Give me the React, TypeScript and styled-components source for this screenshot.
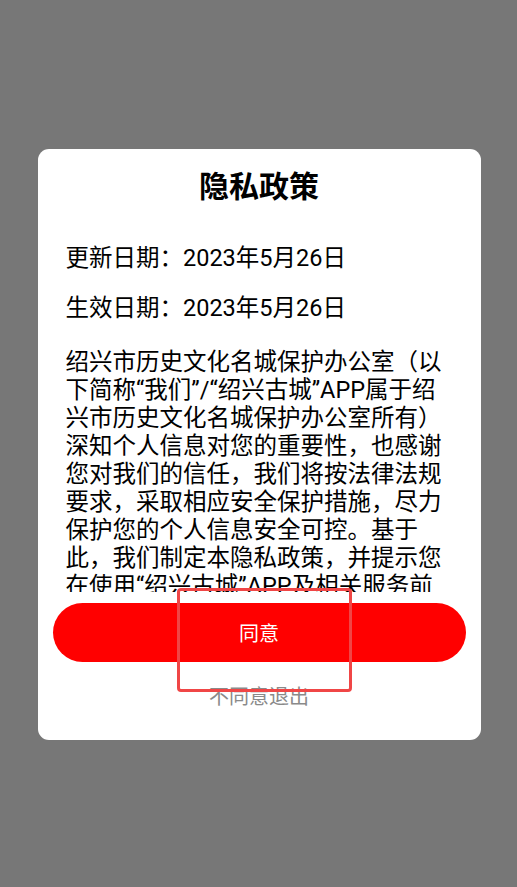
import React from 'react';
import styled, { createGlobalStyle } from 'styled-components';

const GlobalStyle = createGlobalStyle`
  html, body {
    margin: 0;
    padding: 0;
    background: #777777;
  }
  body {
    font-family: Roboto, "Noto Sans CJK SC", sans-serif;
  }
`;

const Screen = styled.div`
  width: 517px;
  height: 887px;
  box-sizing: border-box;
  padding: 1px 0 0 1px;
  display: flex;
  align-items: center;
  justify-content: center;
  background: #777777;
`;

const Dialog = styled.div`
  position: relative;
  width: 443px;
  height: 591px;
  box-sizing: border-box;
  background: #ffffff;
  border-radius: 11px;
  display: flex;
  flex-direction: column;
  padding: 18px 15px 29px;
`;

const Title = styled.h1`
  margin: 0;
  font-size: 30px;
  line-height: 40px;
  font-weight: 700;
  color: #000;
  text-align: center;
`;

const Scroll = styled.div`
  flex: 1;
  overflow: hidden;
  padding: 37px 13px 0;
  margin-bottom: 11px;
`;

const Para = styled.div<{ $gap?: number }>`
  font-size: 23.5px;
  line-height: 28px;
  color: #000;
  margin-bottom: ${(p) => p.$gap ?? 22}px;
`;

const Line = styled.div`
  white-space: nowrap;
`;

const AgreeButton = styled.button`
  height: 59px;
  width: 100%;
  flex-shrink: 0;
  border: none;
  border-radius: 30px;
  background: #ff0000;
  color: #ffffff;
  font-family: inherit;
  font-size: 20px;
  cursor: pointer;
`;

const Refuse = styled.div`
  margin-top: 21px;
  text-align: center;
  font-size: 20px;
  line-height: 28px;
  color: #8a8a8a;
`;

const Highlight = styled.div`
  position: absolute;
  left: 139px;
  top: 439px;
  width: 175px;
  height: 104px;
  box-sizing: border-box;
  border: 3px solid #f04646;
  border-radius: 4px;
  pointer-events: none;
`;

const bodyLines = [
  '绍兴市历史文化名城保护办公室（以',
  '下简称“我们”/“绍兴古城”APP属于绍',
  '兴市历史文化名城保护办公室所有）',
  '深知个人信息对您的重要性，也感谢',
  '您对我们的信任，我们将按法律法规',
  '要求，采取相应安全保护措施，尽力',
  '保护您的个人信息安全可控。基于',
  '此，我们制定本隐私政策，并提示您',
  '在使用“绍兴古城”APP及相关服务前',
  '仔细阅读并充分理解本政策内容。',
];

export default function App() {
  return (
    <Screen>
      <GlobalStyle />
      <Dialog>
        <Title>隐私政策</Title>
        <Scroll>
          <Para>更新日期：2023年5月26日</Para>
          <Para $gap={26}>生效日期：2023年5月26日</Para>
          <Para>
            {bodyLines.map((l) => (
              <Line key={l}>{l}</Line>
            ))}
          </Para>
        </Scroll>
        <AgreeButton>同意</AgreeButton>
        <Refuse>不同意退出</Refuse>
        <Highlight />
      </Dialog>
    </Screen>
  );
}
